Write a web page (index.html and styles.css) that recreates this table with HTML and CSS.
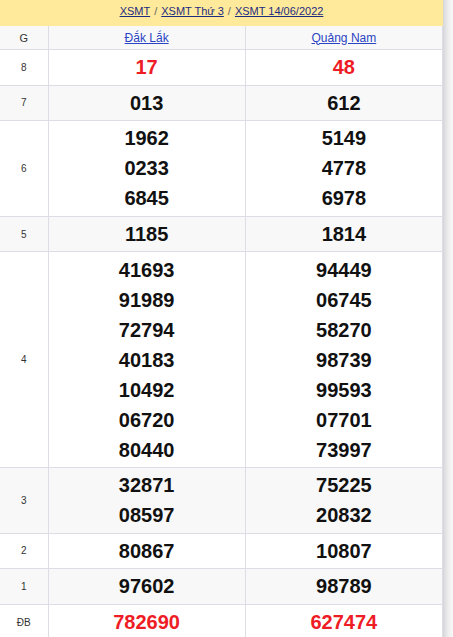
FILE: index.html
```html
<!DOCTYPE html>
<html lang="vi">
<head>
<meta charset="utf-8">
<title>XSMT 14/06/2022</title>
<link rel="stylesheet" href="styles.css">
</head>
<body>
<div class="page">
  <div class="main">
    <div class="crumbs">
      <a href="#">XSMT</a><span class="sep">/</span><a href="#">XSMT Thứ 3</a><span class="sep">/</span><a href="#">XSMT 14/06/2022</a>
    </div>
    <table class="kq">
      <colgroup><col class="c-g"><col><col></colgroup>
      <thead>
        <tr class="alt"><th class="lbl">G</th><th><a href="#">Đắk Lắk</a></th><th><a href="#">Quảng Nam</a></th></tr>
      </thead>
      <tbody>
        <tr><td class="lbl">8</td><td class="num red">17</td><td class="num red">48</td></tr>
        <tr class="alt"><td class="lbl">7</td><td class="num">013</td><td class="num">612</td></tr>
        <tr><td class="lbl">6</td><td class="num">1962<br>0233<br>6845</td><td class="num">5149<br>4778<br>6978</td></tr>
        <tr class="alt"><td class="lbl">5</td><td class="num">1185</td><td class="num">1814</td></tr>
        <tr><td class="lbl">4</td><td class="num">41693<br>91989<br>72794<br>40183<br>10492<br>06720<br>80440</td><td class="num">94449<br>06745<br>58270<br>98739<br>99593<br>07701<br>73997</td></tr>
        <tr class="alt"><td class="lbl">3</td><td class="num">32871<br>08597</td><td class="num">75225<br>20832</td></tr>
        <tr><td class="lbl">2</td><td class="num">80867</td><td class="num">10807</td></tr>
        <tr class="alt"><td class="lbl">1</td><td class="num">97602</td><td class="num">98789</td></tr>
        <tr><td class="lbl">ĐB</td><td class="num red">782690</td><td class="num red">627474</td></tr>
      </tbody>
    </table>
  </div>
  <div class="strip"></div>
</div>
</body>
</html>
```

FILE: styles.css
```css
html, body {
  margin: 0;
  padding: 0;
  background: #fff;
}
body {
  font-family: "Liberation Sans", Arial, sans-serif;
  color: #222;
}
.page {
  display: flex;
  width: 453px;
  min-height: 637px;
}
.main {
  width: 443px;
  flex: none;
}
.strip {
  flex: 1;
  background: linear-gradient(to right, #d6d6d8 0, #e4e4e6 3px, #f0f0f0 6px, #f8f8f8 10px);
}
.crumbs {
  height: 26px;
  background: #ffe99a;
  display: flex;
  align-items: center;
  justify-content: center;
  font-size: 11px;
  box-sizing: border-box;
  padding-bottom: 5px;
}
.crumbs a {
  color: #1d2b80;
  text-decoration: underline;
}
.crumbs .sep {
  color: #666;
  margin: 0 4px;
}
.kq {
  width: 443px;
  border-collapse: collapse;
  table-layout: fixed;
}
.kq .c-g {
  width: 48px;
}
.kq th, .kq td {
  border: 1px solid #dddde5;
  text-align: center;
  vertical-align: middle;
}
.kq tr > :first-child {
  border-left: none;
}
.kq tr:first-child > * {
  border-top: none;
}
.kq th {
  height: 23px;
  padding: 0;
  font-weight: normal;
  font-size: 12px;
}
.kq th a {
  color: #2a44c4;
  text-decoration: underline;
}
.kq th.lbl {
  font-size: 11px;
  color: #333;
}
.alt {
  background: #f8f8f8;
}
.lbl {
  font-size: 10px;
  color: #333;
}
.num {
  font-weight: bold;
  font-size: 20px;
  line-height: 30px;
  padding: 2.3px 0;
  color: #111;
}
.num.red {
  color: #ee1c25;
}
```
